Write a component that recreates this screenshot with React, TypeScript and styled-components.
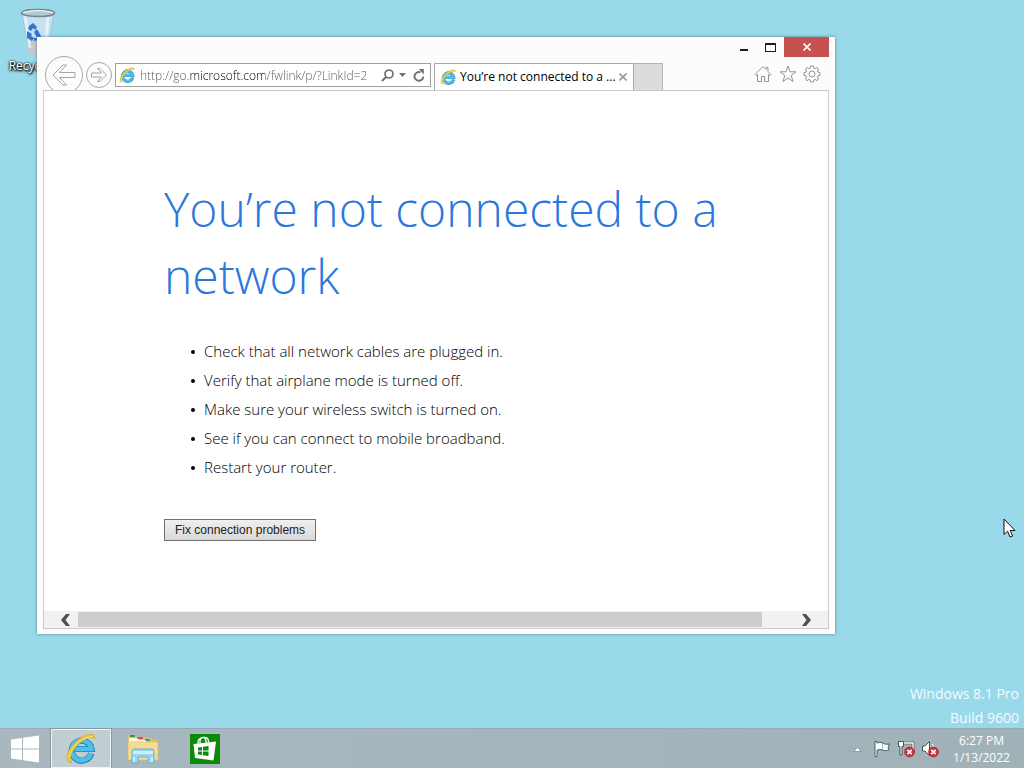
import React from 'react';
import styled, { createGlobalStyle } from 'styled-components';

const GlobalStyle = createGlobalStyle`
  * { box-sizing: border-box; }
  body { margin: 0; font-family: 'Open Sans', 'Noto Sans', sans-serif; }
  button { margin: 0; padding: 0; border: 0; background: none; font: inherit; color: inherit; }
  svg { display: block; flex: none; }
`;

const Desktop = styled.div`
  position: relative;
  display: flex;
  flex-direction: column;
  min-height: 100vh;
  overflow: hidden;
  background: #99d9ea;
`;

const Workspace = styled.main`
  position: relative;
  flex: 1;
  display: flex;
  flex-direction: column;
  justify-content: space-between;
`;

const Shortcut = styled.button`
  align-self: flex-start;
  display: flex;
  flex-direction: column;
  align-items: center;
  gap: 2px;
  width: 80px;
  padding-top: 8px;
  color: #fff;
  font-size: 12px;
  line-height: 16px;
  text-shadow: 0 0 2px #000, 1px 1px 2px #000, 0 1px 3px #000;
  white-space: nowrap;
`;

const Watermark = styled.p`
  margin: 0 5px -2px 0;
  color: #f4fcff;
  font-size: 14px;
  line-height: 24px;
  text-align: right;
`;

const Window = styled.section`
  position: absolute;
  top: 37px;
  left: 37px;
  right: 189px;
  bottom: 94px;
  display: flex;
  flex-direction: column;
  padding: 0 6px 5px;
  background: #fcfcfc;
  box-shadow: 0 0 3px rgba(60, 90, 100, 0.7);
`;

const TitleBar = styled.header`
  display: flex;
  justify-content: flex-end;
  height: 20px;
  flex: none;
`;

const CaptionButton = styled.button<{ $close?: boolean }>`
  display: grid;
  place-items: center;
  width: ${(p) => (p.$close ? 45 : 27)}px;
  height: 20px;
  background: ${(p) => (p.$close ? '#c75050' : 'transparent')};
`;

const NavBar = styled.nav`
  display: flex;
  height: 33px;
  flex: none;
  padding: 0 5px 0 2px;
`;

const RoundButton = styled.button<{ $size: number }>`
  display: grid;
  place-items: center;
  flex: none;
  width: ${(p) => p.$size}px;
  height: ${(p) => p.$size}px;
  margin-right: 3px;
  border: 1px solid #a8a8a8;
  border-radius: 50%;
`;

const NavButtons = styled.div`
  display: flex;
  align-items: center;
  height: 36px;
  flex: none;
`;

const AddressBar = styled.form`
  display: flex;
  align-items: center;
  flex: 0 1 316px;
  min-width: 0;
  height: 24px;
  margin: 6px 3px 0 0;
  padding: 0 3px;
  border: 1px solid #a0a0a0;
  background: #fff;
`;

/* The gradient paints the host name black and the rest of the URL grey. */
const AddressInput = styled.input`
  flex: 1;
  min-width: 0;
  height: 22px;
  margin: 0 4px 0 5px;
  padding: 0;
  border: 0;
  outline: 0;
  font: 300 12px 'Open Sans', 'Noto Sans', sans-serif;
  color: transparent;
  background: linear-gradient(90deg, #555 0 49px, #000 49px 125px, #555 125px);
  background-clip: text;
  -webkit-background-clip: text;
`;

const IconButton = styled.button<{ $width: number }>`
  display: grid;
  place-items: center;
  flex: none;
  width: ${(p) => p.$width}px;
  height: 20px;
`;

const Tab = styled.div`
  display: flex;
  align-items: center;
  flex: 0 1 200px;
  min-width: 0;
  height: 27px;
  margin-top: 6px;
  padding: 0 4px 0 5px;
  border: 1px solid #a8a8a8;
  border-bottom: 0;
  background: #fff;
`;

const TabLabel = styled.button`
  flex: 1;
  min-width: 0;
  padding-left: 4px;
  overflow: hidden;
  font-size: 12px;
  line-height: 20px;
  text-align: left;
  white-space: nowrap;
`;

const NewTab = styled.button`
  flex: none;
  width: 29px;
  height: 27px;
  margin: 6px auto 0 0;
  border: 1px solid #b4b4b4;
  border-width: 1px 1px 0 0;
  background: #dcdcdc;
`;

const Tools = styled.div`
  display: flex;
  align-items: center;
  height: 34px;
`;

const Page = styled.div`
  position: relative;
  display: flex;
  flex-direction: column;
  flex: 1;
  min-height: 0;
  border: 1px solid #cbcbcb;
  background: #fff;
`;

const Article = styled.article`
  flex: 1;
  min-height: 0;
  overflow: hidden;
  padding: 84px 80px 0 120px;
`;

const Heading = styled.h1`
  margin: 0;
  color: #2a78dc;
  font-size: 48px;
  font-weight: 300;
  line-height: 67px;
`;

const Tips = styled.ul`
  margin: 28px 0 0;
  padding: 0 0 0 40px;
  color: #000;
  font-size: 15px;
  font-weight: 300;
  line-height: 29px;
`;

const Tip = styled.li`
  list-style: none;
  display: flex;
  align-items: center;

  &::before {
    content: '';
    width: 4px;
    height: 4px;
    margin: 0 9px 0 -13px;
    border-radius: 50%;
    background: #000;
  }
`;

const FixButton = styled.button`
  height: 22px;
  margin-top: 37px;
  padding: 0 10px;
  border: 1px solid #707070;
  background: linear-gradient(#f0f0f0, #d8d8d8);
  color: #222;
  font: 12px/18px 'Liberation Sans', Arial, sans-serif;
`;

const ScrollBar = styled.div`
  display: flex;
  flex: none;
  height: 17px;
  background: #f1f1f1;
`;

const ScrollArrow = styled.button<{ $end?: boolean }>`
  display: flex;
  align-items: center;
  justify-content: ${(p) => (p.$end ? 'flex-start' : 'flex-end')};
  width: 34px;
  padding: 0 7px;
`;

const ScrollTrack = styled.div`
  flex: 1;
  padding-right: 32px;
`;

const ScrollThumb = styled.div`
  height: 15px;
  margin-top: 1px;
  background: #cdcdcd;
`;

const Taskbar = styled.footer`
  display: flex;
  align-items: stretch;
  height: 40px;
  flex: none;
  background: linear-gradient(90deg, #a8b8be, #a0b2b8);
  border-top: 1px solid #94acb4;
`;

const TaskButton = styled.button<{ $width: number; $active?: boolean }>`
  display: grid;
  place-items: center;
  width: ${(p) => p.$width}px;
  padding-right: 2px;
  border: 1px solid ${(p) => (p.$active ? '#f0f5f7' : 'transparent')};
  outline: ${(p) => (p.$active ? '1px solid #8798a0' : 'none')};
  background: ${(p) => (p.$active ? '#c2cdd2' : 'transparent')};
`;

const Tray = styled.div`
  display: flex;
  align-items: center;
  margin-left: auto;
`;

const Clock = styled.time`
  width: 82px;
  padding-right: 3px;
  color: #fff;
  font-size: 12px;
  line-height: 17px;
  text-align: center;
`;

const Pointer = styled.div`
  position: absolute;
  right: 8px;
  top: 518px;
`;

function IELogo({ size }: { size: number }) {
  return (
    <svg width={size} height={size} viewBox="0 0 32 32" aria-hidden="true">
      <path
        d="M27.200 21A10.300 10.300 0 1 1 27.400 16.500H10"
        fill="none" stroke="#2386b8" strokeWidth="6.400"
      />
      <path
        d="M27 20.800A10.300 10.300 0 1 1 27.300 16.500H10"
        fill="none" stroke="#4cc0ea" strokeWidth="4.600"
      />
      <path
        d="M6.600 30.600C-.8 30 1.600 19.500 8.500 12 15.500 4 25.500-1 30 2.600c.8.700.9 2 .3 3.400-1.800-3-8.300-1.300-14.300 3.500C8 15.800 3 25 6.600 30.600z"
        fill="#f3c62c" stroke="#d4a01b" strokeWidth=".6"
      />
      <path d="M4.500 26C5 17 17 4.600 28 3.500" fill="none" stroke="#fbe685" strokeWidth="1" />
    </svg>
  );
}

function ErrorBadge() {
  return (
    <g>
      <circle cx="12.500" cy="12" r="5" fill="#cf2f37" stroke="#a4222c" strokeWidth=".6" />
      <path d="M10.300 9.800l4.400 4.400m0-4.400l-4.400 4.400" stroke="#fff" strokeWidth="1.700" />
    </g>
  );
}

function RecycleBin() {
  return (
    <svg width="40" height="48" viewBox="0 0 40 48" aria-hidden="true">
      <path d="M2 5l7 40q9 4 18 0l7-40z" fill="#c6e2f2" stroke="#a7c3d2" />
      <path d="M7 31l2 14q8 4 18-1l1-8-10-7z" fill="#cbc8c6" />
      <path d="M5 8l5 32M28 8l-3 34" stroke="#ecf8fe" strokeWidth="3" opacity=".7" />
      <ellipse cx="18" cy="5" rx="16.500" ry="3.500" fill="#b2c9d6" stroke="#75868f" strokeWidth="1.500" />
      <path d="M3 4.500q15-4 30 0" fill="none" stroke="#fff" />
      <g fill="#2f76cf">
        <path d="M9 18l4-3 4 4-2 3-2-2-2 3-3-2z" />
        <path d="M7 23l5 3-1 2 3 2-2 3-5-3z" />
        <path d="M17 21l4 7-2 4-5 1 0-3h3l-3-6z" />
      </g>
    </svg>
  );
}

const tips = [
  'Check that all network cables are plugged in.',
  'Verify that airplane mode is turned off.',
  'Make sure your wireless switch is turned on.',
  'See if you can connect to mobile broadband.',
  'Restart your router.',
];

function Browser() {
  return (
    <Window aria-label="Internet Explorer">
      <TitleBar>
        <CaptionButton aria-label="Minimize">
          <svg width="8" height="12"><path d="M0 8h8v2H0z" fill="#1c1c1c" /></svg>
        </CaptionButton>
        <CaptionButton aria-label="Maximize">
          <svg width="11" height="9">
            <path d="M0 0h11v9H0zM1 2v6h9V2z" fill="#1c1c1c" fillRule="evenodd" />
          </svg>
        </CaptionButton>
        <CaptionButton $close aria-label="Close">
          <svg width="8" height="8">
            <path d="M.5 .5l7 7m0-7l-7 7" stroke="#fff" strokeWidth="1.600" />
          </svg>
        </CaptionButton>
      </TitleBar>
      <NavBar>
        <NavButtons>
          <RoundButton $size={38} aria-label="Back">
            <svg width="24" height="22" viewBox="0 0 24 22">
              <path d="M1 11L11 1h3.500L7.500 8.500H23v5H7.500l7 7.500H11z" fill="none" stroke="#a4a4a4" />
            </svg>
          </RoundButton>
          <RoundButton $size={26} aria-label="Forward">
            <svg width="16" height="16" viewBox="0 0 16 16">
              <path d="M15.500 8L9 1.500H6.500l4 4.500H.5v4h10l-4 4.500H9z" fill="none" stroke="#a4a4a4" />
            </svg>
          </RoundButton>
        </NavButtons>
        <AddressBar onSubmit={(e) => e.preventDefault()}>
          <IELogo size={16} />
          <AddressInput aria-label="Address" defaultValue="http://go.microsoft.com/fwlink/p/?LinkId=2" />
          <IconButton $width={14} type="button" aria-label="Search">
            <svg width="13" height="13" viewBox="0 0 13 13">
              <circle cx="8" cy="5" r="4" fill="none" stroke="#707070" strokeWidth="1.700" />
              <path d="M5 8L1 12" stroke="#707070" strokeWidth="2" />
            </svg>
          </IconButton>
          <IconButton $width={17} type="button" aria-label="Show address history">
            <svg width="7" height="4"><path d="M0 0h7L3.500 4z" fill="#707070" /></svg>
          </IconButton>
          <IconButton $width={16} type="button" aria-label="Refresh">
            <svg width="12" height="13" viewBox="0 0 12 13">
              <path d="M10.300 7.500A4.400 4.400 0 1 1 7.500 3.300" fill="none" stroke="#707070" strokeWidth="1.900" />
              <path d="M5.800 0h5v5.500z" fill="#707070" />
            </svg>
          </IconButton>
        </AddressBar>
        <Tab>
          <IELogo size={16} />
          <TabLabel>You’re not connected to a ...</TabLabel>
          <IconButton $width={12} aria-label="Close tab">
            <svg width="8" height="8">
              <path d="M.5 .5l7 7m0-7l-7 7" stroke="#999" strokeWidth="1.600" />
            </svg>
          </IconButton>
        </Tab>
        <NewTab aria-label="New tab" />
        <Tools>
          <IconButton $width={24} aria-label="Home">
            <svg width="18" height="18" viewBox="0 0 18 18">
              <path d="M1 9.500L9 1.500l3 3V2.500h2v4l3 3-1 1-1.500-1V16.500h-4v-5h-3v5h-4v-7L2 10.500z" fill="none" stroke="#949494" />
            </svg>
          </IconButton>
          <IconButton $width={25} aria-label="Favorites">
            <svg width="18" height="18" viewBox="0 0 18 18">
              <path d="M9 1l2 5.800h6l-4.800 3.700L14 16.500 9 13l-5 3.500 1.800-6L1 6.800h6z" fill="none" stroke="#949494" />
            </svg>
          </IconButton>
          <IconButton $width={24} aria-label="Tools">
            <svg width="18" height="18" viewBox="0 0 18 18" fill="none" stroke="#949494">
              <path d="M7.500 1h3l.4 2.200 1.300.5L14 2.400 15.700 4l-1.300 1.900.5 1.200 2.100.4v3l-2.100.4-.5 1.300 1.300 1.800-1.700 1.700-1.800-1.300-1.300.5-.4 2.100h-3l-.4-2.100-1.300-.5L4 15.700 2.300 14l1.300-1.800-.5-1.300L1 10.500v-3l2.100-.4.5-1.200L2.300 4 4 2.400l1.800 1.300 1.300-.5z" />
              <circle cx="9" cy="9" r="3" />
            </svg>
          </IconButton>
        </Tools>
      </NavBar>
      <Page>
        <Article>
          <Heading>You’re not connected to a network</Heading>
          <Tips>
            {tips.map((tip) => <Tip key={tip}>{tip}</Tip>)}
          </Tips>
          <FixButton>Fix connection problems</FixButton>
        </Article>
        <ScrollBar>
          <ScrollArrow aria-label="Scroll left">
            <svg width="10" height="12"><path d="M5 0h4L4.500 6 9 12H5L0 6z" fill="#505050" /></svg>
          </ScrollArrow>
          <ScrollTrack><ScrollThumb /></ScrollTrack>
          <ScrollArrow $end aria-label="Scroll right">
            <svg width="10" height="12"><path d="M5 0H1l4.500 6L1 12h4l5-6z" fill="#505050" /></svg>
          </ScrollArrow>
        </ScrollBar>
      </Page>
    </Window>
  );
}

export default function App() {
  return (
    <Desktop>
      <GlobalStyle />
      <Workspace>
        <Shortcut>
          <RecycleBin />
          Recycle Bin
        </Shortcut>
        <Watermark>Windows 8.1 Pro<br />Build 9600</Watermark>
        <Browser />
      </Workspace>
      <Taskbar>
        <TaskButton $width={51} aria-label="Start">
          <svg width="28" height="28" viewBox="0 0 28 28" fill="#fff">
            <path d="M0 4.500L11 3v10.500H0zM12 2.800L28 .5v13H12zM0 14.500h11V25L0 23.500zM12 14.500h16v13L12 25.200z" />
          </svg>
        </TaskButton>
        <TaskButton $width={60} $active aria-label="Internet Explorer"><IELogo size={31} /></TaskButton>
        <TaskButton $width={65} aria-label="File Explorer">
          <svg width="32" height="30" viewBox="0 0 32 30">
            <path d="M1 26V2q0-1 1-1h6l2 2h8l1 1h5l1 2h6v20z" fill="#e3bf66" />
            <path d="M3 1h5v2H3z" fill="#36935a" />
            <path d="M10 3h6v2h-6z" fill="#d6523c" />
            <path d="M18 5h5v2h-5z" fill="#3c91c9" />
            <path d="M2 4h8l2 2h6l2 2h11v3H2z" fill="#fff6d8" />
            <path d="M1 8h30v18H1z" fill="#f3dd95" stroke="#dcbb62" strokeWidth=".6" />
            <path d="M5 29V17q0-2 2-2h18q2 0 2 2v12h-6v-6H11v6z" fill="#9bd3f0" stroke="#5ca9d4" strokeWidth=".8" />
            <path d="M6 17h20v3H6z" fill="#d3effb" />
            <path d="M7 23v5M25 23v5" stroke="#e4f7ff" strokeWidth="1.500" />
          </svg>
        </TaskButton>
        <TaskButton $width={60} aria-label="Store">
          <svg width="30" height="30" viewBox="0 0 30 30">
            <path d="M0 0h30v30H0z" fill="#0b8a0b" />
            <path d="M10 9.500V7q0-3 2.500-3.500T16 6.500V9M8 9.800V8q0-2.500 2-3.500M13 3.400q5-.8 5.500 3.600V8.500" fill="none" stroke="#fff" strokeWidth="1.300" />
            <path d="M3.500 10L26 7.500l-2.500 19L5 24z" fill="#fff" />
            <path d="M8 13.500l4-.5v3.500H8zM13 12.800l5.500-.8v4.500H13zM8 17.500h4V21l-4-.5zM13 17.500h5.500V22l-5.500-.8z" fill="#0b8a0b" />
          </svg>
        </TaskButton>
        <Tray>
          <IconButton $width={24} aria-label="Show hidden icons">
            <svg width="9" height="6"><path d="M.8 5.500L4.500 1l3.700 4.500z" fill="#fff" stroke="#5e747c" strokeWidth=".6" /></svg>
          </IconButton>
          <IconButton $width={25} aria-label="Action Center">
            <svg width="18" height="18" viewBox="0 0 18 18">
              <path d="M2 1.500h2V3q3-1.500 5.500 0Q12 5 16.500 4L15 7.500l1 2.500q-4 1.500-6.500 0-2.500-1-5.500 0v6.500H2z" fill="#fff" stroke="#3d525c" strokeWidth=".9" />
              <path d="M9.500 3.500V10" stroke="#8199a3" strokeWidth=".7" />
            </svg>
          </IconButton>
          <IconButton $width={24} aria-label="Network: not connected">
            <svg width="18" height="18" viewBox="0 0 18 18">
              <path d="M6 3h10v8H7" fill="#9eb0b6" stroke="#33454e" strokeWidth="2.600" />
              <path d="M6 3h10v8H7" fill="none" stroke="#fff" strokeWidth="1.400" />
              <path d="M1.500 1.500h5v5H5V15H3V6.500H1.500z" fill="#fff" stroke="#33454e" strokeWidth=".9" />
              <ErrorBadge />
            </svg>
          </IconButton>
          <IconButton $width={24} aria-label="Volume: unavailable">
            <svg width="18" height="18" viewBox="0 0 18 18">
              <path d="M1.500 6h2.500L8.500 1.500v14L4 11H1.500z" fill="#fff" stroke="#33454e" strokeWidth=".9" />
              <path d="M11 4q1.500 1 2 3" fill="none" stroke="#fff" />
              <ErrorBadge />
            </svg>
          </IconButton>
          <Clock>6:27 PM<br />1/13/2022</Clock>
        </Tray>
      </Taskbar>
      <Pointer>
        <svg width="13" height="21" viewBox="0 0 13 21">
          <path d="M1 1v15.500l3.600-3.300L7 19l2.600-1-2.400-5.500H12z" fill="#fff" stroke="#111" />
        </svg>
      </Pointer>
    </Desktop>
  );
}
